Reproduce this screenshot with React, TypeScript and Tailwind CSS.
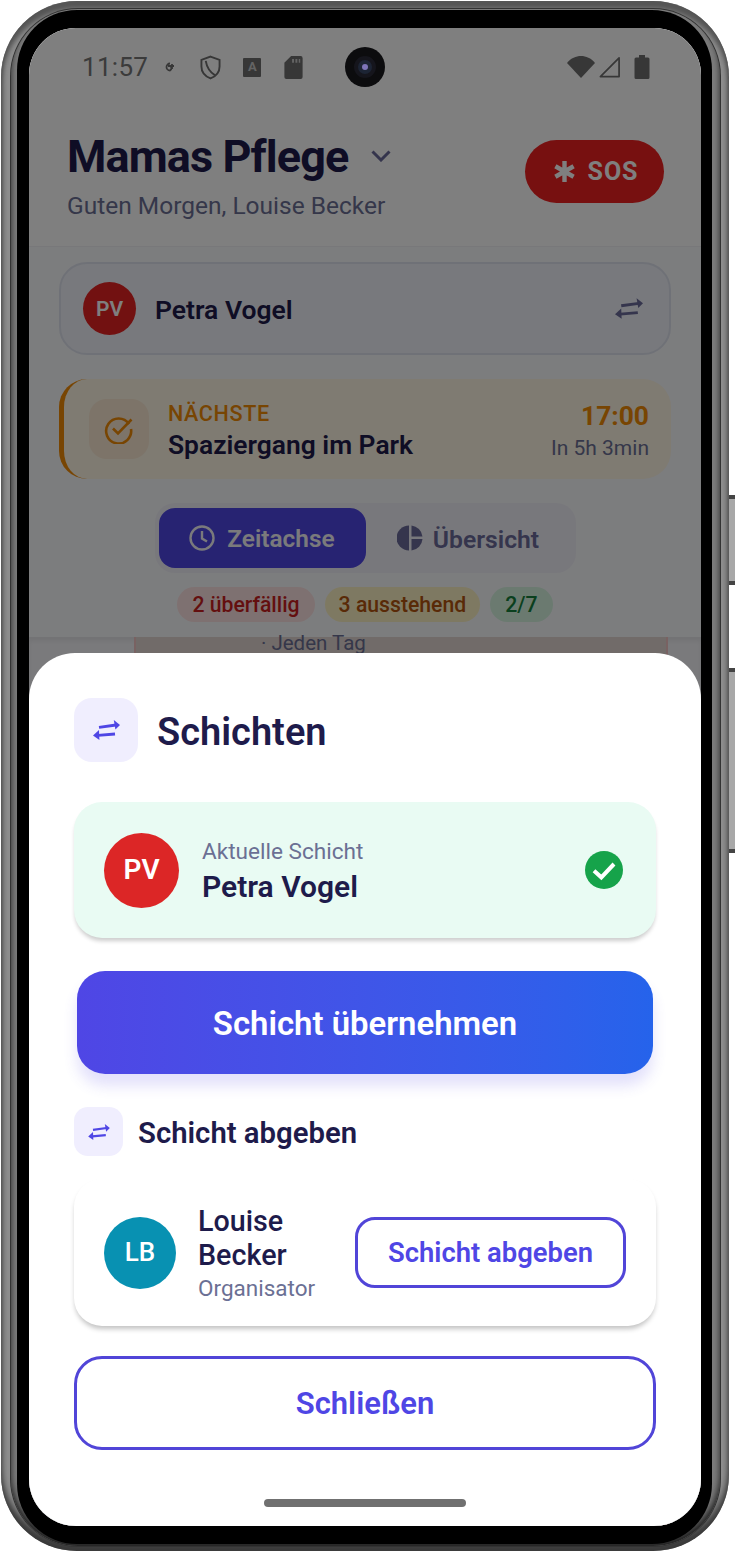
import React from "react";

const Swap = ({ className }: { className: string }) => (
	<svg viewBox="0 0 27 20" className={className} fill="currentColor" stroke="none">
		<path d="M6 7.4 L23 5" stroke="currentColor" strokeWidth="2.8" fill="none" />
		<path d="M27 5 L20.8 0 L22.4 9.6 Z" />
		<path d="M22 14 L5 15.4" stroke="currentColor" strokeWidth="2.8" fill="none" />
		<path d="M0 15.6 L6 10 L6.4 20 Z" />
	</svg>
);

const StatusBar = () => (
	<div className="h-[76px] shrink-0 flex items-center pl-[53px] pr-[51px] pt-[2px] text-[#6e6e6e]">
		<span className="text-[26px] tracking-[0.3px] text-[#777]">11:57</span>
		<svg viewBox="0 0 12 12" className="w-[12px] h-[12px] ml-[15px]" fill="none" stroke="currentColor" strokeWidth="1.8">
			<path d="M7 2.5 A3.5 3.5 0 1 0 7 9.5 A2.5 2.5 0 0 0 7 5 H5" />
			<path d="M7 5 H11 M9 3 V8" />
		</svg>
		<svg viewBox="0 0 22 26" className="w-[21px] h-[25px] ml-[25px]" fill="none" stroke="currentColor" strokeWidth="2">
			<path d="M11 1.5 L20.5 5 V12 C20.5 18 16 22.5 11 24.5 C6 22.5 1.5 18 1.5 12 V5 Z" />
			<path d="M6 6 C7 12 11 18 15.5 21" />
		</svg>
		<div className="w-[18px] h-[19px] ml-[22px] bg-[#6e6e6e] rounded-[1px] flex justify-center text-[13px] leading-[18px] font-bold text-[#c8c8c8]">A</div>
		<svg viewBox="0 0 19 24" className="w-[19px] h-[23px] ml-[23px]" fill="currentColor">
			<path d="M7 0 H17 A2 2 0 0 1 19 2 V22 A2 2 0 0 1 17 24 H2 A2 2 0 0 1 0 22 V7 Z" />
			<path d="M8 3 H10 V7 H8 Z M11.5 3 H13.5 V7 H11.5 Z M15 3 H16.5 V7 H15 Z" fill="#c8c8c8" />
		</svg>
		<div className="flex-1" />
		<svg viewBox="0 0 28 24" className="w-[28px] h-[24px]" fill="currentColor">
			<path d="M0 8 C4 3 9 1 14 1 C19 1 24 3 28 8 L14 23 Z" />
		</svg>
		<svg viewBox="0 0 24 24" className="w-[23px] h-[24px] ml-[3px]" fill="none" stroke="currentColor" strokeWidth="1.8">
			<path d="M22 2.5 V22 H2.5 Z" strokeLinejoin="round" />
		</svg>
		<svg viewBox="0 0 16 24" className="w-[16px] h-[24px] ml-[13px]" fill="currentColor">
			<path d="M5 0 H11 V2.5 H14 A1.5 1.5 0 0 1 15.5 4 V22.5 A1.5 1.5 0 0 1 14 24 H2 A1.5 1.5 0 0 1 0.5 22.5 V4 A1.5 1.5 0 0 1 2 2.5 H5 Z" />
		</svg>
	</div>
);

const AppBehind = () => (
	<div className="flex flex-col h-full bg-[#f9fafd]">
		<div className="bg-white shrink-0">
			<StatusBar />
			<div className="h-[143px] border-b border-[#f0f0f4] flex justify-between pl-[38px] pr-[37px] pt-[27px]">
				<div>
					<div className="flex items-center">
						<h1 className="text-[45px] leading-[52px] font-bold tracking-[-0.9px] text-[#1e1b4b]">Mamas Pflege</h1>
						<svg viewBox="0 0 20 12" className="w-[20px] h-[12px] ml-[23px] mt-[-3px]" fill="none" stroke="#6b6b9a" strokeWidth="3">
							<path d="M1.5 1.5 L10 10 L18.5 1.5" />
						</svg>
					</div>
					<p className="text-[24.5px] leading-[30px] mt-[8px] text-[#6b6f94]">Guten Morgen, Louise Becker</p>
				</div>
				<div className="w-[139px] h-[63px] mt-[9px] rounded-full bg-[#ef2020] flex items-center justify-center gap-[11px] pl-[3px] text-[#fff]">
					<svg viewBox="0 0 24 24" className="w-[23px] h-[23px]" stroke="currentColor" strokeWidth="4.6" fill="none">
						<path d="M12 1 V23 M2.5 6.5 L21.5 17.5 M2.5 17.5 L21.5 6.5" />
					</svg>
					<span className="text-[25px] font-bold tracking-[1px]">SOS</span>
				</div>
			</div>
		</div>

		<div className="px-[30px] pt-[15px] shrink-0">
			<div className="h-[93px] rounded-[28px] border-2 border-[#dfe3ee] bg-[#f0f3fa] flex items-center pl-[22px] pr-[26px]">
				<div className="w-[53px] h-[53px] rounded-full bg-[#e52222] text-white text-[21px] font-semibold flex items-center justify-center pt-[2px]">PV</div>
				<span className="ml-[19px] pt-[2px] text-[26.5px] font-semibold text-[#1e1b4b]">Petra Vogel</span>
				<div className="flex-1" />
				<Swap className="w-[28px] h-[21px] text-[#6b6b9a]" />
			</div>

			<div className="mt-[24px] h-[100px] rounded-[28px] border-l-[5px] border-[#f08a05] bg-[#fef6e4] flex items-center pl-[25px] pr-[22px]">
				<div className="w-[60px] h-[60px] rounded-[18px] bg-[#fbe8d2] flex items-center justify-center">
					<svg viewBox="0 0 30 30" className="w-[30px] h-[30px]" fill="none" stroke="#f08a05" strokeWidth="2.6">
						<path d="M25 10 A12.5 12.5 0 1 0 27 15" />
						<path d="M9 14.5 L14 19.5 L27.5 5.5" />
					</svg>
				</div>
				<div className="ml-[19px] pt-[5px]">
					<div className="text-[21.6px] leading-[26px] font-medium tracking-[0.6px] text-[#f08a05]">NÄCHSTE</div>
					<div className="text-[26.4px] leading-[33px] mt-[2px] font-semibold text-[#1e1b4b]">Spaziergang im Park</div>
				</div>
				<div className="flex-1" />
				<div className="text-right pt-[4px]">
					<div className="text-[26.4px] leading-[32px] font-bold text-[#f08a05]">17:00</div>
					<div className="text-[21px] leading-[28px] mt-[2px] text-[#6b6f94]">In 5h 3min</div>
				</div>
			</div>

			<div className="flex justify-center mt-[24px]">
				<div className="w-[421px] h-[70px] rounded-[20px] bg-[#f1f1f8] p-[5px] pl-[4px] flex">
					<div className="w-[207px] h-[60px] rounded-[16px] bg-[#4f46e5] flex items-center justify-center gap-[12px] text-[#f4f4f8]">
						<svg viewBox="0 0 26 26" className="w-[26px] h-[26px]" fill="none" stroke="currentColor" strokeWidth="2.4">
							<circle cx="13" cy="13" r="11.5" />
							<path d="M13 6 V13.5 L18 16.5" />
						</svg>
						<span className="text-[24.4px] pt-[3px] font-semibold">Zeitachse</span>
					</div>
					<div className="flex-1 flex items-center justify-center gap-[10px] text-[#6b6b9a]">
						<svg viewBox="0 0 26 26" className="w-[26px] h-[26px]" fill="currentColor">
							<path d="M12 0.5 V25.5 A12.5 12.5 0 0 1 12 0.5 Z" />
							<path d="M14.5 0.5 A12.5 12.5 0 0 1 25.5 11.5 H14.5 Z" />
							<path d="M14.5 14 H25.5 A12.5 12.5 0 0 1 14.5 25.5 Z" />
						</svg>
						<span className="text-[24.7px] pt-[3px] font-semibold">Übersicht</span>
					</div>
				</div>
			</div>

			<div className="flex justify-center gap-[10px] mt-[14px] text-[21.2px] font-medium">
				<span className="h-[35px] px-[15px] rounded-full bg-[#fde2e2] text-[#c81e1e] leading-[35px]">2 überfällig</span>
				<span className="h-[35px] px-[14px] rounded-full bg-[#fdf3c4] text-[#b3540e] leading-[35px]">3 ausstehend</span>
				<span className="h-[35px] px-[15px] rounded-full bg-[#d6f5e1] text-[#15803d] leading-[35px]">2/7</span>
			</div>
		</div>

		<div className="mt-[15px] flex-1 bg-[#f4f4f8] shadow-[inset_0_4px_4px_rgba(0,0,0,0.06)] pl-[105px] pr-[33px]">
			<div className="h-full border-x-2 border-[#f3c4c4] bg-[#e2d6d2] pl-[125px] text-[20.5px] leading-[13px] text-[#6b6f94]">
				· Jeden Tag
			</div>
		</div>
	</div>
);

const ShiftSheet = () => (
	<div className="absolute inset-x-0 bottom-0 h-[873px] bg-white rounded-t-[46px] px-[45px] pt-[45px]">
		<div className="flex items-center">
			<div className="w-[64px] h-[64px] rounded-[18px] bg-[#f0eefe] flex items-center justify-center">
				<Swap className="w-[27px] h-[20px] text-[#4f46e5]" />
			</div>
			<h2 className="ml-[19px] pt-[4px] text-[38px] font-semibold text-[#1e1b4b]">Schichten</h2>
		</div>

		<div className="mt-[40px] h-[136px] rounded-[28px] bg-[#e9fbf3] shadow-[0_4px_4px_-1px_rgba(0,0,0,0.2)] flex items-center pl-[30px] pr-[33px]">
			<div className="w-[75px] h-[75px] rounded-full bg-[#dc2626] text-white text-[28px] font-semibold flex items-center justify-center">PV</div>
			<div className="ml-[23px] pt-[4px]">
				<div className="text-[22.6px] leading-[27px] text-[#6b7094]">Aktuelle Schicht</div>
				<div className="text-[30px] leading-[40px] mt-[2px] font-semibold text-[#1e1b4b]">Petra Vogel</div>
			</div>
			<div className="flex-1" />
			<div className="w-[38px] h-[38px] rounded-full bg-[#16a34a] flex items-center justify-center">
				<svg viewBox="0 0 24 24" className="w-[32px] h-[32px]" fill="none" stroke="white" strokeWidth="3">
					<path d="M4.5 12.5 L10 17.5 L19.5 7.5" />
				</svg>
			</div>
		</div>

		<div className="mx-[3px] mt-[33px] h-[103px] pt-[2px] rounded-[28px] bg-gradient-to-r from-[#4f46e5] to-[#2563eb] shadow-[0_12px_14px_rgba(79,70,229,0.16)] flex items-center justify-center text-white text-[32.9px] font-semibold">
			Schicht übernehmen
		</div>

		<div className="mt-[33px] flex items-center">
			<div className="w-[49px] h-[49px] rounded-[14px] bg-[#f0eefe] flex items-center justify-center">
				<Swap className="w-[22px] h-[16px] text-[#4f46e5]" />
			</div>
			<h3 className="ml-[15px] pt-[4px] text-[29.3px] font-semibold text-[#1e1b4b]">Schicht abgeben</h3>
		</div>

		<div className="mt-[23px] h-[147px] rounded-[28px] bg-white shadow-[0_4px_5px_-1px_rgba(0,0,0,0.24)] flex items-center pl-[30px] pr-[30px]">
			<div className="w-[72px] h-[72px] rounded-full bg-[#0891b2] text-white text-[26px] font-medium flex items-center justify-center shrink-0">LB</div>
			<div className="ml-[22px] w-[135px] shrink-0 pt-[3px]">
				<div className="text-[28.7px] leading-[34px] font-medium text-[#1e1b4b]">Louise Becker</div>
				<div className="text-[22.5px] leading-[32px] text-[#6b7094]">Organisator</div>
			</div>
			<div className="flex-1" />
			<div className="w-[271px] h-[71px] pt-[2px] rounded-[20px] border-[3px] border-[#5145d8] flex items-center justify-center text-[27.4px] font-semibold text-[#4f46e5]">
				Schicht abgeben
			</div>
		</div>

		<div className="mt-[30px] h-[94px] pt-[3px] rounded-[28px] border-[3px] border-[#5145d8] flex items-center justify-center text-[31px] font-semibold text-[#4f46e5]">
			Schließen
		</div>

		<div className="mt-[49px] mx-auto w-[202px] h-[8px] rounded-full bg-[#707070]" />
	</div>
);

export default function App() {
	return (
		<div className="w-[735px] h-[1553px] bg-white relative overflow-hidden font-['Roboto',sans-serif]">
			{/* side buttons */}
			<div className="absolute left-[729px] top-[495px] w-[6px] h-[90px] bg-[#a8a8a8] border-y-[4px] border-[#444]" />
			<div className="absolute left-[729px] top-[668px] w-[6px] h-[185px] bg-[#a8a8a8] border-y-[4px] border-[#444]" />

			<div className="ml-[1px] mt-[1px] w-[728px] h-[1550px] rounded-[76px] bg-[#8e8e8e] shadow-[inset_0_-9px_6px_#3a3a3a,inset_0_8px_5px_#555] pl-[9px] pr-[8px] pt-[7px] pb-[4px] relative">
				<div className="w-full h-full rounded-[68px] bg-[#333] p-[1px]">
					<div className="w-full h-full rounded-[67px] bg-[#7c7c7c] shadow-[inset_0_-6px_6px_#222] pl-[6px] pr-[8px] pt-[1px] pb-[2px]">
						<div className="w-full h-full rounded-[60px] bg-black pl-[12px] pr-[11px] pt-[18px] pb-[18px]">
							<div className="w-full h-full rounded-[47px] overflow-hidden relative">
								<AppBehind />
								<div className="absolute inset-0 bg-black/50" />
								<ShiftSheet />
								{/* camera punch hole */}
								<div className="absolute left-[316px] top-[19px] w-[40px] h-[40px] rounded-full bg-[#0c0c0e] flex items-center justify-center">
									<div className="w-[22px] h-[22px] rounded-full bg-[#1c2434] border-[4px] border-[#15151c] flex items-center justify-center">
										<div className="w-[6px] h-[6px] rounded-full bg-[#7d74b8]" />
									</div>
								</div>
							</div>
						</div>
					</div>
				</div>
			</div>
		</div>
	);
}
